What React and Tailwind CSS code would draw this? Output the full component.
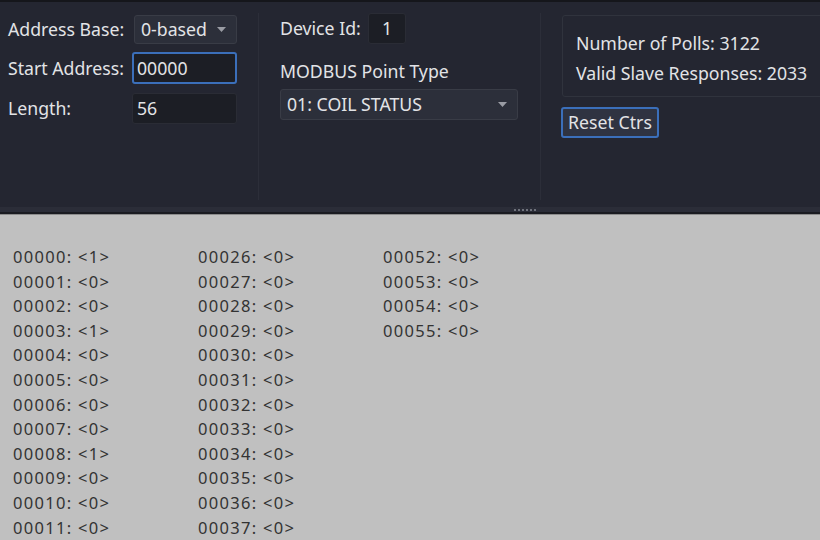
import React from 'react';

const font = { fontFamily: '"Noto Sans", "Open Sans", sans-serif' };

const ones = new Set([0, 3, 8]);
const rows = Array.from({ length: 56 }, (_, i) => ({
  addr: String(i).padStart(5, '0'),
  val: ones.has(i) ? 1 : 0,
}));
// only the rows that fit in the visible list area
const columns = [rows.slice(0, 12), rows.slice(26, 38), rows.slice(52)];

const Arrow = () => (
  <svg width="9" height="5" viewBox="0 0 9 5" className="shrink-0">
    <path d="M0 0h9L4.5 5z" fill="#9a9ca4" />
  </svg>
);

const Combo = ({ value, className }) => (
  <div
    className={`flex shrink-0 items-center justify-between rounded-[3px] border border-[#393c46] bg-[#2c2f3a] pl-[6px] pr-[10px] ${className}`}
  >
    <span>{value}</span>
    <Arrow />
  </div>
);

export default function App() {
  return (
    <div className="h-[540px] w-[820px] overflow-hidden bg-[#c0c0c0]" style={font}>
      <div className="h-[2px] bg-[#15161b]" />
      {/* Top controls panel */}
      <div className="flex h-[205px] bg-[#242631] text-[17.7px] text-[#e2e3e6]">
        {/* column 1 */}
        <div className="mb-[7px] mt-[11px] w-[259px] shrink-0 border-r border-[#2c2e39] pl-[8px]">
          <div className="mt-[2px] flex h-[29px] items-center">
            <span className="w-[126px] shrink-0">Address Base:</span>
            <Combo value="0-based" className="h-[29px] w-[103px]" />
          </div>
          <div className="mt-[8px] flex h-[32px] items-center">
            <span className="w-[124px] shrink-0">Start Address:</span>
            <div className="flex h-[32px] w-[105px] shrink-0 items-center rounded-[3px] border-2 border-[#3b6fba] bg-[#1c1e25] pl-[3px]">
              00000
            </div>
          </div>
          <div className="mt-[9px] flex h-[31px] items-center">
            <span className="w-[124px] shrink-0">Length:</span>
            <div className="flex h-[31px] w-[105px] shrink-0 items-center rounded-[3px] border border-[#2a2c35] bg-[#1c1e25] pl-[4px]">
              56
            </div>
          </div>
        </div>

        {/* column 2 */}
        <div className="mb-[7px] mt-[11px] w-[282px] shrink-0 border-r border-[#2c2e39] pl-[21px]">
          <div className="flex h-[31px] items-center">
            <span className="w-[88px] shrink-0">Device Id:</span>
            <div className="flex h-[31px] w-[38px] shrink-0 items-center justify-center rounded-[3px] border border-[#2a2c35] bg-[#1c1e25]">
              1
            </div>
          </div>
          <div className="mt-[14px] flex h-[26px] items-center">MODBUS Point Type</div>
          <Combo value="01: COIL STATUS" className="mt-[5px] h-[31px] w-[238px]" />
        </div>

        {/* column 3 */}
        <div className="min-w-0 flex-1 pl-[21px] pt-[13px]">
          <div className="flex h-[82px] w-[280px] flex-col justify-center gap-[3px] rounded-[3px] border border-[#30333d] bg-[#242631] pl-[13px] pt-[4px]">
            <span className="whitespace-nowrap">Number of Polls: 3122</span>
            <span className="whitespace-nowrap">Valid Slave Responses: 2033</span>
          </div>
          <button className="ml-[-1px] mt-[10px] flex h-[31px] w-[98px] items-center justify-center rounded-[3px] border-2 border-[#3b6fba] bg-[#2f3341] text-[#e2e3e6]">
            Reset Ctrs
          </button>
        </div>
      </div>

      {/* splitter */}
      <div className="flex h-[5px] items-center bg-[#2b2d38] pl-[514px]">
        <div className="h-[2px] w-[22px] bg-[repeating-linear-gradient(90deg,#6f727c_0px,#6f727c_2px,transparent_2px,transparent_4px)]" />
      </div>
      <div className="h-[2px] bg-[#1a1b21]" />
      <div className="h-px bg-[#8c8c8c]" />

      {/* coil list */}
      <div className="flex pl-[13px] pt-[30px] text-[16.5px] leading-[24.6px] tracking-[1.3px] text-[#333333]">
        {columns.map((col, ci) => (
          <div key={ci} className="flex w-[185px] flex-col">
            {col.map((r) => (
              <span key={r.addr}>
                {r.addr}: &lt;{r.val}&gt;
              </span>
            ))}
          </div>
        ))}
      </div>
    </div>
  );
}
